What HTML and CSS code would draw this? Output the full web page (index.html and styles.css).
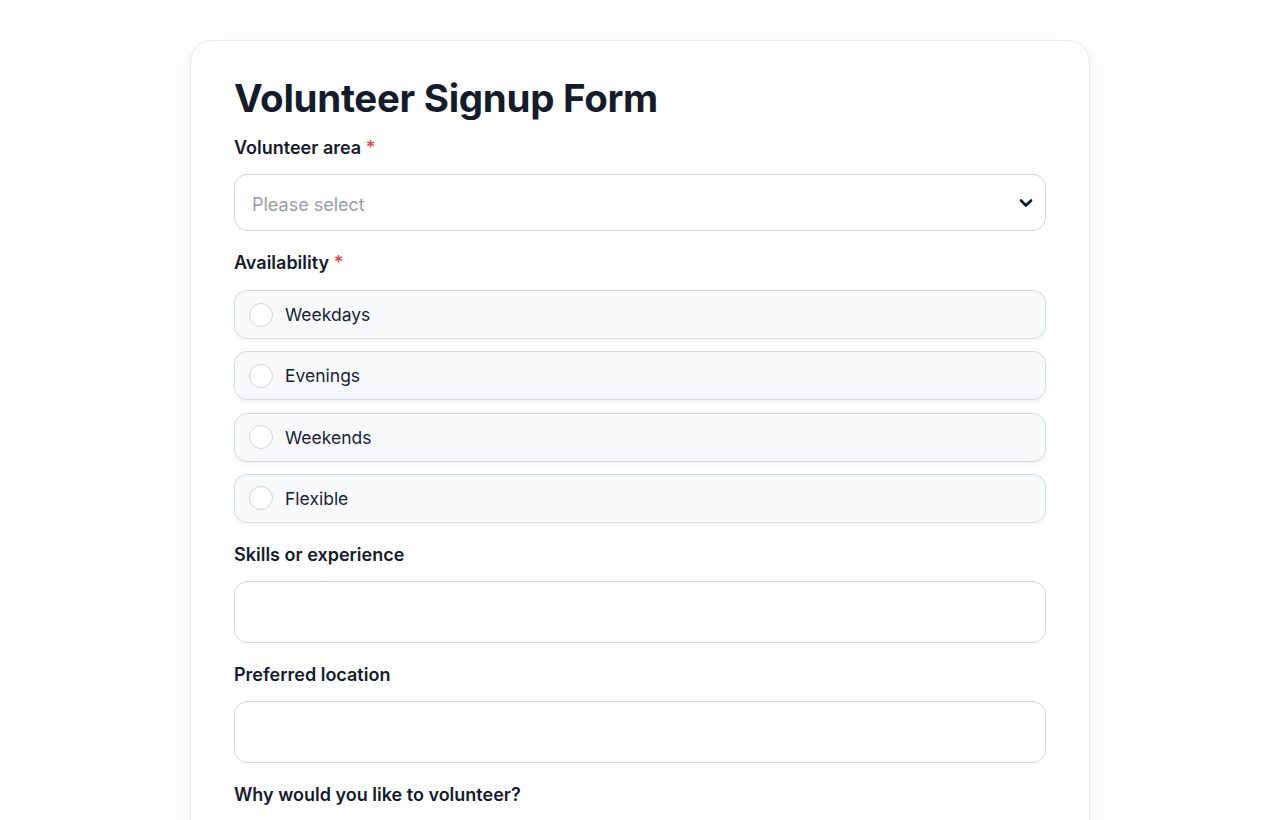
FILE: index.html
```html
<!DOCTYPE html>
<html lang="en">
<head>
<meta charset="utf-8">
<title>Volunteer Signup Form</title>
<link rel="stylesheet" href="styles.css">
</head>
<body>
<main class="card">
  <h1 class="title">Volunteer Signup Form</h1>

  <div class="field">
    <label class="label">Volunteer area <span class="req">*</span></label>
    <div class="select">
      <span class="placeholder">Please select</span>
      <svg class="chev" width="14" height="10" viewBox="0 0 14 10"><path d="M2 2.5 L7 7.5 L12 2.5" fill="none" stroke="#111827" stroke-width="2.6" stroke-linecap="round" stroke-linejoin="round"/></svg>
    </div>
  </div>

  <div class="field">
    <div class="label label-radio">Availability <span class="req">*</span></div>
    <div class="options">
      <div class="option"><span class="radio"></span><span class="opt-text">Weekdays</span></div>
      <div class="option"><span class="radio"></span><span class="opt-text">Evenings</span></div>
      <div class="option"><span class="radio"></span><span class="opt-text">Weekends</span></div>
      <div class="option"><span class="radio"></span><span class="opt-text">Flexible</span></div>
    </div>
  </div>

  <div class="field">
    <label class="label">Skills or experience</label>
    <div class="input"></div>
  </div>

  <div class="field">
    <label class="label">Preferred location</label>
    <div class="input"></div>
  </div>

  <div class="field">
    <label class="label">Why would you like to volunteer?</label>
    <div class="input tall"></div>
  </div>
</main>
</body>
</html>
```

FILE: styles.css
```css
* { box-sizing: border-box; }
html, body { margin: 0; padding: 0; background: #ffffff; }
body {
  font-family: Inter, "Noto Sans", "Liberation Sans", sans-serif;
  color: #141b2d;
  height: 820px;
  overflow: hidden;
}
.card {
  width: 900px;
  margin: 40px auto 0;
  background: #fff;
  border: 1px solid #e8eaee;
  border-radius: 22px;
  box-shadow: 0 10px 40px rgba(20, 27, 45, 0.06);
  padding: 33px 43px 40px;
}
.title {
  margin: 0;
  font-size: 38.5px;
  line-height: 48px;
  font-weight: 700;
  color: #141b2d;
  letter-spacing: -0.3px;
}
.field { margin-top: 12px; }
.field + .field { margin-top: 18px; }
.label {
  display: block;
  font-size: 18px;
  line-height: 27px;
  font-weight: 600;
  color: #141b2d;
  margin-bottom: 13px;
}
.label-radio { margin-bottom: 14px; }
.req { color: #e5484d; }
.select {
  height: 57px;
  border: 1px solid #d2d5dd;
  border-radius: 13px;
  display: flex;
  align-items: center;
  justify-content: space-between;
  padding: 4px 12px 0 17px;
}
.placeholder {
  font-size: 18px;
  color: #9a9ea8;
}
.chev { display: block; margin-top: -3px; }
.options { display: flex; flex-direction: column; gap: 12.33px; }
.option {
  height: 49px;
  background: #f8f9fb;
  border: 1px solid #d6d9e0;
  border-radius: 13px;
  box-shadow: 0 2px 4px rgba(20, 27, 45, 0.06);
  display: flex;
  align-items: center;
  padding-left: 14px;
}
.radio {
  width: 24px;
  height: 24px;
  border-radius: 50%;
  border: 1px solid #cfd2d9;
  background: #fff;
  margin-right: 12px;
}
.opt-text {
  font-size: 17.5px;
  color: #1b2233;
}
.input {
  height: 62px;
  border: 1px solid #d2d5dd;
  border-radius: 13px;
}
.input.tall { height: 120px; }
```
